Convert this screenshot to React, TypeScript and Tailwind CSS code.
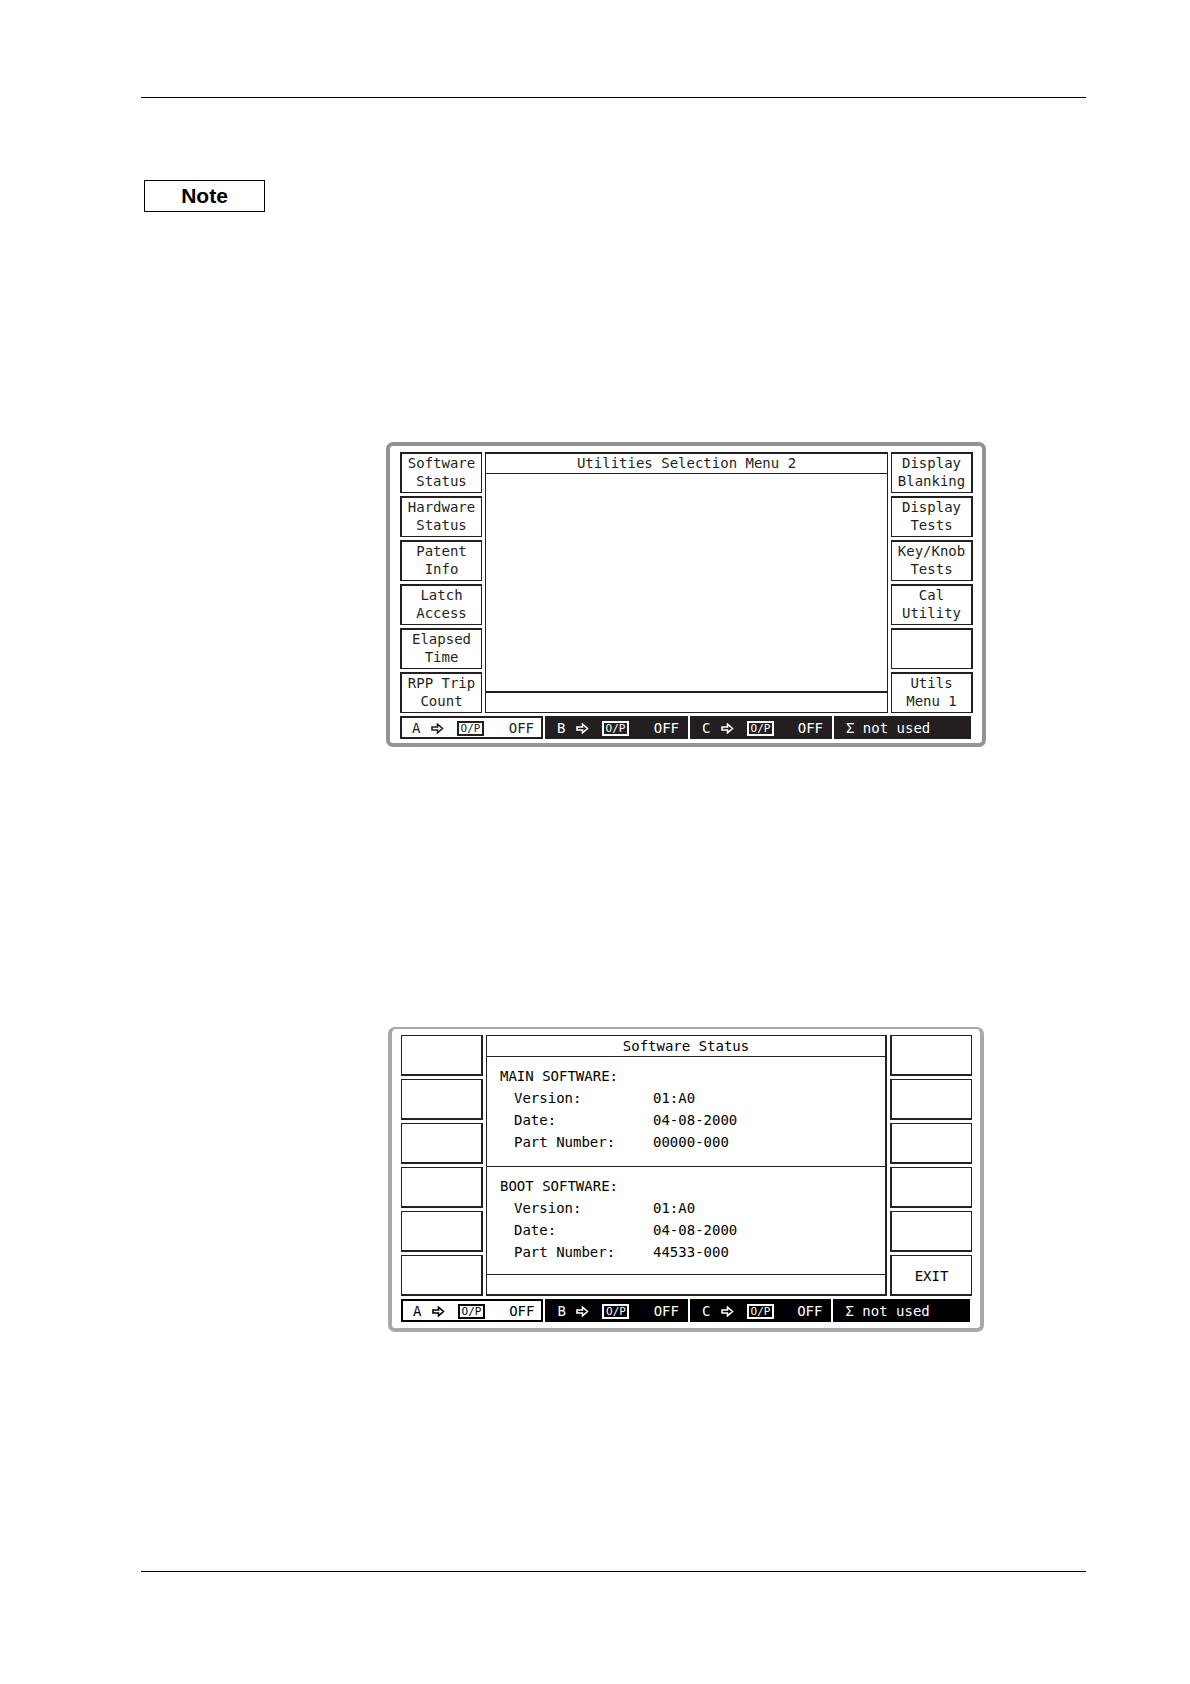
import type { ReactNode } from "react";

type Tone = "ink" | "black";

const softKeyBorders = {
  ink: {
    left: "pb-[2px] border-t-2 border-l-2 border-r border-b border-[#231f20]",
    right: "pb-[2px] border-t-2 border-l border-r-2 border-b border-[#231f20]",
  },
  black: {
    left: "pt-[2px] border border-r-2 border-b-2 border-[#222222]",
    right: "pt-[2px] border border-l-2 border-b-2 border-[#222222]",
  },
};

function SoftKeys({ keys, side, tone }: { keys: string[][]; side: "left" | "right"; tone: Tone }) {
  return (
    <div className="grid auto-rows-[41px] gap-[3px]">
      {keys.map((lines, i) => (
        <button
          key={i}
          type="button"
          aria-label={lines.length ? lines.join(" ") : `Unassigned ${side} key ${i + 1}`}
          className={`flex flex-col items-center justify-center leading-[18px] ${softKeyBorders[tone][side]}`}
        >
          {lines.map((line) => (
            <span key={line}>{line}</span>
          ))}
        </button>
      ))}
    </div>
  );
}

function Arrow() {
  return (
    <svg viewBox="0 0 13 11" className="h-[11px] w-[13px]" fill="none" stroke="currentColor" strokeWidth="1.6" aria-hidden="true">
      <path d="M1 4H6.5V1.2L11.5 5.5L6.5 9.8V7H1Z" />
    </svg>
  );
}

function Channel({ name, inverse, fill }: { name: string; inverse?: boolean; fill: string }) {
  return (
    <div
      className={`flex items-center justify-between border-2 pt-[2px] pr-[7px] pl-[10px] leading-[17px] ${
        inverse ? `${fill} text-white` : "bg-white"
      }`}
    >
      <span className="flex items-center">
        <span className="w-[19px]">{name}</span>
        <Arrow />
        <span className="ml-[13px] flex h-[15px] w-[27px] items-center justify-center border-2 text-[11px] leading-[11px]">
          O/P
        </span>
      </span>
      <span>OFF</span>
    </div>
  );
}

function StatusBar({ tone }: { tone: Tone }) {
  const fill = tone === "ink" ? "bg-[#231f20] border-[#231f20]" : "bg-black border-black";
  const wide = tone === "ink" ? "bg-[#231f20]" : "bg-black";
  return (
    <div className="mt-[3px] mr-[2px] grid h-[23px] grid-cols-[143fr_143fr_142fr_137fr] gap-[2px]">
      <Channel name="A" fill={fill} />
      <Channel name="B" inverse fill={fill} />
      <Channel name="C" inverse fill={fill} />
      <div className={`flex items-center pt-[2px] pl-3 whitespace-pre text-white ${wide}`}>Σ not used</div>
    </div>
  );
}

function Screen({
  title,
  left,
  right,
  tone,
  children,
}: {
  title: string;
  left: string[][];
  right: string[][];
  tone: Tone;
  children?: ReactNode;
}) {
  const ink = tone === "ink";
  return (
    <section
      aria-label={title}
      className={`w-full rounded-[7px] font-['DejaVu_Sans_Mono','Liberation_Mono',monospace] text-[14px] ${
        ink
          ? "max-w-[600px] border-4 border-[#939393] pt-[6px] pr-[9px] pb-1 pl-[10px] text-[#231f20]"
          : "mx-[2px] max-w-[596px] border-4 border-t-2 border-[#a8a8a8] pt-[6px] pr-2 pb-[6px] pl-[9px] text-black"
      }`}
    >
      <div className="grid grid-cols-[82px_minmax(0,1fr)_82px] gap-[3px]">
        <SoftKeys keys={left} side="left" tone={tone} />
        <div
          className={`flex flex-col ${
            ink ? "border border-t-2 border-[#231f20]" : "border border-r-2 border-b-2 border-[#222222]"
          }`}
        >
          <h2
            className={`border-b text-center ${
              ink ? "border-[#231f20] leading-[19px]" : "border-[#222222] leading-[20px]"
            }`}
          >
            {title}
          </h2>
          <div className="flex flex-1 flex-col">{children}</div>
          <div className={ink ? "h-[21px] border-t-2 border-[#231f20]" : "h-[20px] border-t border-[#222222]"} />
        </div>
        <SoftKeys keys={right} side="right" tone={tone} />
      </div>
      <StatusBar tone={tone} />
    </section>
  );
}

function SoftwareInfo({ name, rows }: { name: string; rows: [string, string][] }) {
  return (
    <table className="w-full text-left leading-[22px]">
      <caption className="pl-[13px] text-left">{name}</caption>
      <tbody>
        {rows.map(([label, value]) => (
          <tr key={label}>
            <th scope="row" className="w-[166px] pl-[27px] font-normal whitespace-nowrap">
              {label}
            </th>
            <td>{value}</td>
          </tr>
        ))}
      </tbody>
    </table>
  );
}

export default function App() {
  return (
    <main className="min-h-screen bg-white pt-[97px] pr-[104px] pb-[111px] pl-[141px] text-black">
      <hr className="border-t border-black" />
      <div className="mt-[82px] ml-[3px] w-[121px] border border-black text-center font-['Liberation_Sans',Arial,sans-serif] text-[21px] leading-[30px] font-bold">
        Note
      </div>
      <div className="mt-[230px] ml-[245px] flex flex-col gap-[280px]">
        <Screen
          tone="ink"
          title="Utilities Selection Menu 2"
          left={[
            ["Software", "Status"],
            ["Hardware", "Status"],
            ["Patent", "Info"],
            ["Latch", "Access"],
            ["Elapsed", "Time"],
            ["RPP Trip", "Count"],
          ]}
          right={[
            ["Display", "Blanking"],
            ["Display", "Tests"],
            ["Key/Knob", "Tests"],
            ["Cal", "Utility"],
            [],
            ["Utils", "Menu 1"],
          ]}
        />
        <Screen
          tone="black"
          title="Software Status"
          left={[[], [], [], [], [], []]}
          right={[[], [], [], [], [], ["EXIT"]]}
        >
          <div className="h-[110px] border-b border-[#222222] pt-[8px]">
            <SoftwareInfo
              name="MAIN SOFTWARE:"
              rows={[
                ["Version:", "01:A0"],
                ["Date:", "04-08-2000"],
                ["Part Number:", "00000-000"],
              ]}
            />
          </div>
          <div className="pt-[8px]">
            <SoftwareInfo
              name="BOOT SOFTWARE:"
              rows={[
                ["Version:", "01:A0"],
                ["Date:", "04-08-2000"],
                ["Part Number:", "44533-000"],
              ]}
            />
          </div>
        </Screen>
      </div>
      <hr className="mt-[239px] border-t border-black" />
    </main>
  );
}
